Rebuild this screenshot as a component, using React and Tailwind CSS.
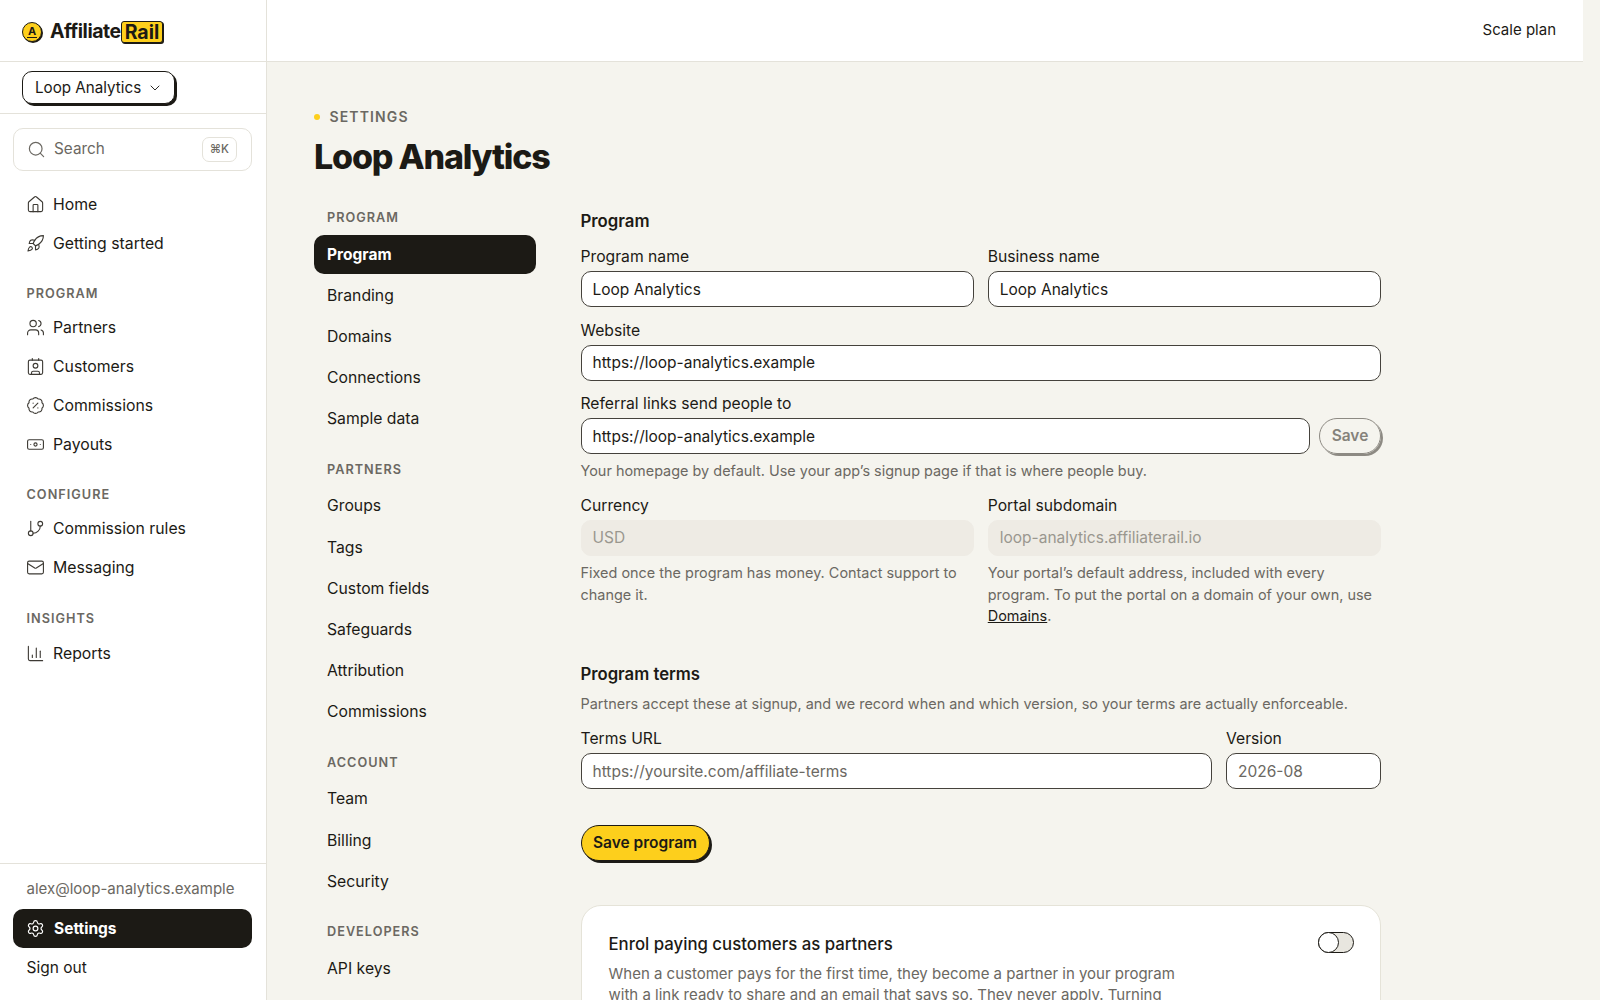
import { useState } from 'react';
import {
  House,
  Rocket,
  Users,
  Contact,
  BadgePercent,
  Banknote,
  GitBranch,
  Mail,
  ChartColumn,
  Settings,
  Search,
  ChevronDown,
} from 'lucide-react';

const mainNav = [
  { items: [{ label: 'Home', icon: House }, { label: 'Getting started', icon: Rocket }] },
  {
    title: 'PROGRAM',
    items: [
      { label: 'Partners', icon: Users },
      { label: 'Customers', icon: Contact },
      { label: 'Commissions', icon: BadgePercent },
      { label: 'Payouts', icon: Banknote },
    ],
  },
  {
    title: 'CONFIGURE',
    items: [
      { label: 'Commission rules', icon: GitBranch },
      { label: 'Messaging', icon: Mail },
    ],
  },
  { title: 'INSIGHTS', items: [{ label: 'Reports', icon: ChartColumn }] },
];

const settingsNav = [
  { title: 'PROGRAM', items: ['Program', 'Branding', 'Domains', 'Connections', 'Sample data'] },
  { title: 'PARTNERS', items: ['Groups', 'Tags', 'Custom fields', 'Safeguards', 'Attribution', 'Commissions'] },
  { title: 'ACCOUNT', items: ['Team', 'Billing', 'Security'] },
  { title: 'DEVELOPERS', items: ['API keys'] },
];

function Logo() {
  return (
    <div className="flex items-center gap-[8px]">
      <span className="flex h-[20px] w-[20px] items-center justify-center rounded-full border border-[#1c1a15] bg-[#fdcf1c] shadow-[1px_1px_0_#1c1a15]">
        <span className="border-b border-[#1c1a15] px-[1px] text-[11px] font-bold leading-[11px] text-[#1c1a15]">A</span>
      </span>
      <span className="flex items-center text-[19.5px] font-bold tracking-[-0.025em] text-[#1c1a15]">
        Affiliate
        <span className="rounded-[3px] border border-[#1c1a15] bg-[#fdcf1c] px-[3px] leading-[20px] tracking-normal shadow-[1px_1px_0_#1c1a15]">
          Rail
        </span>
      </span>
    </div>
  );
}

function Sidebar() {
  return (
    <aside className="flex h-screen w-[267px] shrink-0 flex-col border-r border-[#e4e2da] bg-white">
      <div className="flex h-[62px] shrink-0 items-center border-b border-[#e4e2da] pl-[22px] pt-[2px]">
        <Logo />
      </div>
      <div className="flex h-[52px] shrink-0 items-center border-b border-[#e4e2da] pl-[22px]">
        <button className="flex h-[33px] w-[153px] items-center gap-[6px] rounded-[10px] border border-[#1c1a15] bg-white pl-[12px] pt-[1px] text-[15.2px] text-[#1c1a15] shadow-[2px_2px_0_#1c1a15]">
          Loop Analytics
          <ChevronDown size={16} strokeWidth={1.4} />
        </button>
      </div>
      <div className="flex-1 pl-[13px] pr-[14px] pt-[14px]">
        <div className="flex h-[43px] items-center rounded-[10px] border border-[#e4e2da] pl-[13px] pr-[14px] text-[#6b6862]">
          <Search size={19} strokeWidth={1.5} />
          <span className="ml-[8px] flex-1 text-[15.3px]">Search</span>
          <span className="rounded-[7px] border border-[#e4e2da] px-[7px] py-[3px] text-[11.5px] font-medium leading-[17px]">⌘K</span>
        </div>
        <nav className="mt-[14px]">
          {mainNav.map((group, i) => (
            <div key={i} className={group.title ? (i === 3 ? 'mt-[16px]' : 'mt-[17px]') : ''}>
              {group.title && (
                <div className={`flex items-center pl-[13.5px] text-[12.7px] font-semibold tracking-[0.08em] text-[#6b6862] ${i === 3 ? 'h-[31px]' : 'h-[28px]'}`}>
                  {group.title}
                </div>
              )}
              {group.items.map(({ label, icon: Icon }) => (
                <a key={label} className="flex h-[39px] items-center gap-[8px] pl-[13px] text-[15.8px] text-[#1c1a15]">
                  <Icon size={19} strokeWidth={1.4} className="text-[#3d3a34]" />
                  {label}
                </a>
              ))}
            </div>
          ))}
        </nav>
      </div>
      <div className="shrink-0 border-t border-[#e4e2da] pb-[13px] pl-[13px] pr-[14px] pt-[14px]">
        <div className="pl-[13.5px] text-[15px] leading-[22px] text-[#6b6862]">alex@loop-analytics.example</div>
        <a className="mt-[9px] flex h-[39px] items-center gap-[9px] rounded-[10px] bg-[#1c1a15] pl-[13px] text-[15.5px] font-bold text-white">
          <Settings size={19} strokeWidth={1.5} />
          Settings
        </a>
        <div className="flex h-[39px] items-center pl-[13.5px] text-[15.5px] text-[#1c1a15]">Sign out</div>
      </div>
    </aside>
  );
}

function SettingsNav() {
  return (
    <div className="w-[222px] shrink-0">
      {settingsNav.map((group, i) => (
        <div key={group.title} className={i > 0 ? 'mt-[18.5px]' : ''}>
          <div className="flex h-[24px] items-center pl-[13px] text-[12.7px] font-semibold tracking-[0.08em] text-[#6b6862]">
            {group.title}
          </div>
          <div className="mt-[5.5px] flex flex-col gap-[2.2px]">
            {group.items.map((item, j) =>
              i === 0 && j === 0 ? (
                <a key={item} className="flex h-[39px] items-center rounded-[10px] bg-[#1c1a15] pl-[13px] text-[15.5px] font-bold text-white">
                  {item}
                </a>
              ) : (
                <a key={item} className="flex h-[39px] items-center pl-[13px] text-[15.75px] text-[#1c1a15]">
                  {item}
                </a>
              )
            )}
          </div>
        </div>
      ))}
    </div>
  );
}

function Field({ label, children, className = '' }) {
  return (
    <label className={`block ${className}`}>
      <span className="block text-[15.7px] leading-[22px] text-[#1c1a15]">{label}</span>
      {children}
    </label>
  );
}

function TextInput({ value, placeholder }) {
  return (
    <input
      defaultValue={value}
      placeholder={placeholder}
      className="mt-[3px] block h-[36px] w-full rounded-[10px] border border-[#45423c] bg-white px-[11px] text-[15.5px] text-[#1c1a15] outline-none placeholder:text-[#6b6862]"
    />
  );
}

function DisabledInput({ value }) {
  return (
    <div className="mt-[3px] flex h-[36px] items-center rounded-[10px] border border-[#eeebe4] bg-[#eeebe4] px-[11px] text-[15.5px] text-[#9a978f]">
      {value}
    </div>
  );
}

function ProgramForm() {
  const [enrol, setEnrol] = useState(false);
  return (
    <div className="ml-[44.5px] w-[800.5px] shrink-0 pt-[3.5px]">
      <h2 className="text-[16.8px] font-semibold leading-[24px] text-[#1c1a15]">Program</h2>
      <div className="mt-[13px] grid grid-cols-2 gap-[14px]">
        <Field label="Program name"><TextInput value="Loop Analytics" /></Field>
        <Field label="Business name"><TextInput value="Loop Analytics" /></Field>
      </div>
      <Field label="Website" className="mt-[12.5px]"><TextInput value="https://loop-analytics.example" /></Field>
      <div className="mt-[12.5px]">
        <Field label="Referral links send people to">
          <div className="flex items-center gap-[9px]">
            <TextInput value="https://loop-analytics.example" />
            <button className="mt-[3px] h-[36px] w-[62px] shrink-0 rounded-full border border-[#8d8a83] text-[15.5px] font-semibold text-[#85827b] shadow-[2px_2px_0_#8d8a83]">
              Save
            </button>
          </div>
        </Field>
        <p className="mt-[6px] text-[14.45px] leading-[21px] text-[#6b6862]">
          Your homepage by default. Use your app’s signup page if that is where people buy.
        </p>
      </div>
      <div className="mt-[14px] grid grid-cols-2 gap-[14px]">
        <div>
          <Field label="Currency"><DisabledInput value="USD" /></Field>
          <p className="mt-[6px] text-[14.45px] leading-[21.5px] text-[#6b6862]">
            Fixed once the program has money. Contact support to change it.
          </p>
        </div>
        <div>
          <Field label="Portal subdomain"><DisabledInput value="loop-analytics.affiliaterail.io" /></Field>
          <p className="mt-[6px] text-[14.45px] leading-[21.5px] text-[#6b6862]">
            Your portal’s default address, included with every program. To put the portal on a domain of your own, use{' '}
            <a className="text-[#1c1a15] underline">Domains</a>.
          </p>
        </div>
      </div>
      <h2 className="mt-[35px] text-[16.7px] font-semibold leading-[24px] text-[#1c1a15]">Program terms</h2>
      <p className="mt-[7.5px] text-[14.45px] leading-[21px] text-[#6b6862]">
        Partners accept these at signup, and we record when and which version, so your terms are actually enforceable.
      </p>
      <div className="mt-[14px] flex gap-[14px]">
        <Field label="Terms URL" className="flex-1"><TextInput placeholder="https://yoursite.com/affiliate-terms" /></Field>
        <Field label="Version" className="w-[155px]"><TextInput placeholder="2026-08" /></Field>
      </div>
      <button className="mt-[35.5px] block h-[36px] w-[129px] rounded-full border border-[#1c1a15] bg-[#fdcf1c] text-[15.5px] font-semibold text-[#1c1a15] shadow-[2px_2px_0_#1c1a15]">
        Save program
      </button>
      <div className="mt-[44px] flex items-start justify-between rounded-[20px] border border-[#e5e3d8] bg-white pb-[26px] pl-[27px] pr-[26px] pt-[26px]">
        <div className="w-[590px]">
          <h3 className="text-[16.8px] font-medium leading-[24px] text-[#1c1a15]">Enrol paying customers as partners</h3>
          <p className="mt-[7px] text-[15px] leading-[21px] text-[#6b6862]">
            When a customer pays for the first time, they become a partner in your program with a link ready to share and an email that says so. They never apply. Turning
          </p>
        </div>
        <button
          onClick={() => setEnrol(!enrol)}
          className="flex h-[21px] w-[36px] items-center rounded-full border border-[#1c1a15] bg-[#e8e6df]"
        >
          <span className="-ml-[1px] h-[21px] w-[21px] rounded-full border border-[#1c1a15] bg-white" />
        </button>
      </div>
    </div>
  );
}

export default function App() {
  return (
    <div className="flex h-screen overflow-hidden bg-[#f5f4ee] font-['Inter',sans-serif]">
      <Sidebar />
      <main className="flex h-screen min-w-0 flex-1 flex-col">
        <header className="flex h-[62px] w-[1316px] shrink-0 items-center justify-end border-b border-[#e4e2da] bg-white pr-[27px] text-[15px] text-[#1c1a15]">
          Scale plan
        </header>
        <div className="min-h-0 flex-1 overflow-hidden pl-[47px] pt-[45px]">
          <div className="flex items-center gap-[9.5px] text-[14px] font-semibold leading-[20px] tracking-[0.08em] text-[#6b6862]">
            <span className="h-[6px] w-[6px] rounded-full bg-[#fdcf1c]" />
            SETTINGS
          </div>
          <h1 className="mt-[9px] text-[34px] font-extrabold leading-[42px] tracking-[-0.035em] text-[#1c1a15]">Loop Analytics</h1>
          <div className="mt-[27.5px] flex">
            <SettingsNav />
            <ProgramForm />
          </div>
        </div>
      </main>
    </div>
  );
}
